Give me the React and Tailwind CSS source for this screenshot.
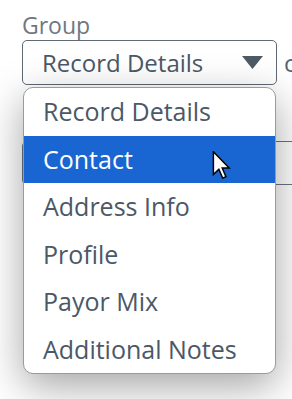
import { useState } from 'react'

const options = ['Record Details', 'Contact', 'Address Info', 'Profile', 'Payor Mix', 'Additional Notes']

function Cursor() {
  return (
    <svg width="19" height="28" viewBox="0 0 12 19" className="absolute left-[212px] top-[151px]">
      <path d="M0.5 0.5 L0.5 16 L4.2 12.4 L6.8 18.4 L9 17.4 L6.5 11.6 L11.2 11.6 Z" fill="#fff" stroke="#000" strokeWidth="1" strokeLinejoin="miter" />
    </svg>
  )
}

export default function App() {
  const [active] = useState(1)
  return (
    <div className="relative w-[292px] h-[399px] overflow-hidden bg-white font-['Open_Sans',sans-serif]">
      <div className="pl-[22px] pt-[10px]">
        <div className="h-[30px] leading-[30px] text-[23px] text-[#6e7883]">Group</div>
        <div className="flex items-center gap-[7px]">
          <div className="flex h-[45px] w-[255px] shrink-0 items-center justify-between rounded-[5px] border border-[#5f6a74] pl-[19px] pr-[13px]">
            <span className="text-[24px] leading-[43px] text-[#4b5867]">Record Details</span>
            <svg width="21" height="13" viewBox="0 0 21 13">
              <path d="M0 0 H21 L10.5 13 Z" fill="#4f5b64" />
            </svg>
          </div>
          <span className="text-[24px] leading-[45px] text-[#5a6570]">c</span>
        </div>
        <div className="mt-[56px] h-[44px] w-[300px] rounded-[5px] border border-[#6b7580]" />
      </div>

      <div className="absolute left-[23px] top-[87px] w-[253px] overflow-hidden rounded-[10px] border border-[#9a9a9a] bg-white shadow-[0_12px_40px_rgba(0,0,0,0.36)]">
        {options.map((o, i) => (
          <div
            key={o}
            className={
              i === active
                ? 'h-[47.5px] pl-[19px] text-[25px] leading-[47.5px] bg-[#1966d2] text-white'
                : 'h-[47.5px] pl-[19px] text-[25px] leading-[47.5px] text-[#4b5867]'
            }
          >
            {o}
          </div>
        ))}
      </div>
      <Cursor />
    </div>
  )
}
